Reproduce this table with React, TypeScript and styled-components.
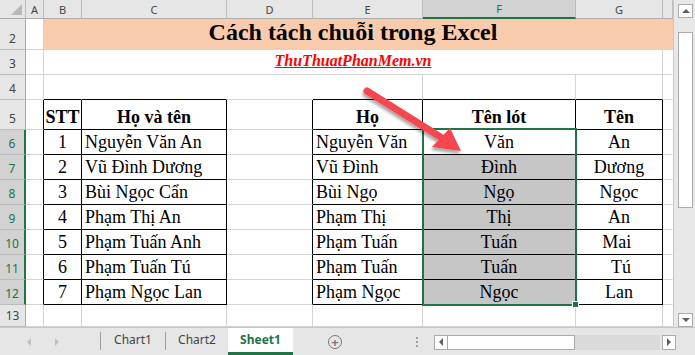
import styled, { createGlobalStyle } from "styled-components";

const GlobalStyle = createGlobalStyle`
  html, body { margin: 0; padding: 0; background: #fff; }
  body { font-family: "Liberation Serif", "Times New Roman", serif; }
`;

const GREEN = "#217346";
const GRID = "#d4d4d4";
const PEACH = "#f8cbad";
const BLACK = "#000";
const SHADE = "#c6c6c6";

const COLS = [26, 18, 38, 145, 86, 110, 153, 87, 10];
const ROWS = [19, 31, 25, 25, 30, 25, 25, 25, 25, 25, 25, 25, 22];
const LETTERS = ["A", "B", "C", "D", "E", "F", "G", ""];

// grid column index: 1 = row header, 2 = A ... 9 = H
const A = 2, B = 3, C = 4, D = 5, E = 6, F = 7, G = 8, H = 9;

const people = [
  ["1", "Nguyễn Văn An"],
  ["2", "Vũ Đình Dương"],
  ["3", "Bùi Ngọc Cẩn"],
  ["4", "Phạm Thị An"],
  ["5", "Phạm Tuấn Anh"],
  ["6", "Phạm Tuấn Tú"],
  ["7", "Phạm Ngọc Lan"],
];

const split = [
  ["Nguyễn Văn", "Văn", "An"],
  ["Vũ Đình", "Đình", "Dương"],
  ["Bùi Ngọ", "Ngọ", "Ngọc"],
  ["Phạm Thị", "Thị", "An"],
  ["Phạm Tuấn", "Tuấn", "Mai "],
  ["Phạm Tuấn", "Tuấn", " Tú"],
  ["Phạm Ngọc", "Ngọc", "Lan"],
];

const Window = styled.div`
  width: 695px;
  height: 355px;
  display: flex;
  flex-direction: column;
  overflow: hidden;
  background: #fff;
`;

const Workspace = styled.div`
  display: flex;
  height: 327px;
`;

const Sheet = styled.div`
  position: relative;
  width: 673px;
  display: grid;
  grid-template-columns: ${COLS.map((c) => c + "px").join(" ")};
  grid-template-rows: ${ROWS.map((r) => r + "px").join(" ")};
`;

const Corner = styled.div`
  grid-column: 1;
  grid-row: 1;
  box-sizing: border-box;
  background: #e6e6e6;
  border-right: 1px solid #bcbcbc;
  border-bottom: 1px solid #ababab;
  display: flex;
  align-items: flex-end;
  justify-content: flex-end;
  padding: 0 3px 3px 0;
`;

const CornerMark = styled.div`
  width: 0;
  height: 0;
  border-left: 11px solid transparent;
  border-bottom: 11px solid #b8b8b8;
`;

const ColHead = styled.div<{ $col: number; $active?: boolean }>`
  grid-column: ${(p) => p.$col};
  grid-row: 1;
  box-sizing: border-box;
  background: ${(p) => (p.$active ? "#d2d2d2" : "#e6e6e6")};
  border-right: 1px solid #bcbcbc;
  border-bottom: ${(p) => (p.$active ? `2px solid ${GREEN}` : "1px solid #ababab")};
  display: flex;
  align-items: center;
  justify-content: center;
  font-family: "Noto Sans", "Open Sans", sans-serif;
  font-size: 11px;
  color: ${(p) => (p.$active ? GREEN : "#444")};
`;

const RowHead = styled.div<{ $row: number; $active?: boolean }>`
  grid-column: 1;
  grid-row: ${(p) => p.$row};
  box-sizing: border-box;
  background: ${(p) => (p.$active ? "#d2d2d2" : "#e6e6e6")};
  border-right: ${(p) => (p.$active ? `2px solid ${GREEN}` : "1px solid #ababab")};
  border-bottom: 1px solid #bcbcbc;
  display: flex;
  align-items: flex-end;
  justify-content: center;
  padding-bottom: 2px;
  font-family: "Noto Sans", "Open Sans", sans-serif;
  font-size: 12px;
  line-height: 16px;
  color: ${(p) => (p.$active ? GREEN : "#444")};
`;

const Cell = styled.div<{
  $col: number;
  $row: number;
  $span?: number;
  $fill?: string;
  $r?: string;
  $b?: string;
  $align?: "left" | "center";
  $bold?: boolean;
}>`
  grid-column: ${(p) => p.$col} / span ${(p) => p.$span ?? 1};
  grid-row: ${(p) => p.$row};
  box-sizing: border-box;
  min-width: 0;
  background: ${(p) => p.$fill ?? "#fff"};
  border-right: 1px solid ${(p) => p.$r ?? GRID};
  border-bottom: 1px solid ${(p) => p.$b ?? GRID};
  display: flex;
  align-items: flex-end;
  justify-content: ${(p) => (p.$align === "center" ? "center" : "flex-start")};
  padding: 0 3px 2px;
  font-size: 18px;
  line-height: 20px;
  font-weight: ${(p) => (p.$bold ? 700 : 400)};
  color: #000;
  white-space: pre;
`;

const Title = styled.span`
  font-size: 24px;
  line-height: 28px;
  font-weight: 700;
  margin-bottom: 1px;
`;

const Brand = styled.span`
  font-size: 16px;
  line-height: 18px;
  font-weight: 700;
  font-style: italic;
  color: #ff0000;
  text-decoration: underline;
  margin-bottom: 2px;
`;

const Selection = styled.div`
  grid-column: ${F};
  grid-row: 6 / span 7;
  margin: -2px -1px -1px -1px;
  border: 2px solid ${GREEN};
  position: relative;
  pointer-events: none;
`;

const FillHandle = styled.div`
  position: absolute;
  right: -4px;
  bottom: -4px;
  width: 5px;
  height: 5px;
  background: ${GREEN};
  border: 1px solid #fff;
`;

const ArrowLayer = styled.svg`
  position: absolute;
  left: 0;
  top: 0;
  width: 673px;
  height: 327px;
  pointer-events: none;
`;

const VScroll = styled.div`
  width: 22px;
  box-sizing: border-box;
  background: #e8e8e8;
  border-left: 1px solid #c8c8c8;
  display: flex;
  flex-direction: column;
  align-items: center;
  padding: 4px 0 0 2px;
`;

const ScrollBtn = styled.div`
  width: 15px;
  height: 14px;
  box-sizing: border-box;
  background: #fff;
  border: 1px solid #ababab;
  display: flex;
  align-items: center;
  justify-content: center;
  flex-shrink: 0;
`;

const VThumb = styled.div`
  width: 15px;
  height: 176px;
  margin-top: 14px;
  box-sizing: border-box;
  background: #fff;
  border: 1px solid #ababab;
`;

const Spacer = styled.div`
  flex: 1;
`;

const Tri = styled.div<{ $dir: "up" | "down" | "left" | "right"; $color?: string; $size?: number }>`
  width: 0;
  height: 0;
  ${(p) => {
    const s = p.$size ?? 4;
    const c = p.$color ?? "#606060";
    if (p.$dir === "up") return `border-left:${s}px solid transparent;border-right:${s}px solid transparent;border-bottom:${s}px solid ${c};`;
    if (p.$dir === "down") return `border-left:${s}px solid transparent;border-right:${s}px solid transparent;border-top:${s}px solid ${c};`;
    if (p.$dir === "left") return `border-top:${s}px solid transparent;border-bottom:${s}px solid transparent;border-right:${s}px solid ${c};`;
    return `border-top:${s}px solid transparent;border-bottom:${s}px solid transparent;border-left:${s}px solid ${c};`;
  }}
`;

const TabBar = styled.div`
  height: 28px;
  box-sizing: border-box;
  border-top: 1px solid #c6c6c6;
  background: #e6e6e6;
  display: flex;
  align-items: stretch;
  font-family: "Noto Sans", "Open Sans", sans-serif;
  font-size: 12px;
  color: #444;
`;

const NavArea = styled.div`
  width: 100px;
  display: flex;
  align-items: center;
  gap: 24px;
  padding-left: 27px;
  box-sizing: border-box;
`;

const Divider = styled.div`
  width: 1px;
  background: #9c9c9c;
  margin: 4px 0 5px;
`;

const Tab = styled.div<{ $active?: boolean; $w: number }>`
  width: ${(p) => p.$w}px;
  box-sizing: border-box;
  display: flex;
  align-items: center;
  justify-content: center;
  padding-bottom: 2px;
  background: ${(p) => (p.$active ? "#fff" : "transparent")};
  border-bottom: ${(p) => (p.$active ? `3px solid ${GREEN}` : "3px solid transparent")};
  color: ${(p) => (p.$active ? GREEN : "#444")};
  font-weight: ${(p) => (p.$active ? 700 : 400)};
`;

const AddSheet = styled.div`
  width: 12px;
  height: 12px;
  margin: 0 0 0 35px;
  align-self: center;
  border: 1.5px solid #777;
  border-radius: 50%;
  display: flex;
  align-items: center;
  justify-content: center;
  color: #777;
  font-size: 13px;
  line-height: 12px;
  font-weight: 700;
`;

const Grip = styled.div`
  margin-left: 74px;
  align-self: center;
  display: flex;
  flex-direction: column;
  gap: 2px;
`;

const GripDot = styled.div`
  width: 2px;
  height: 2px;
  background: #a0a0a0;
`;

const HScroll = styled.div`
  margin-left: 16px;
  align-self: center;
  display: flex;
  align-items: center;
  margin-top: 1px;
`;

const HBtn = styled.div`
  width: 14px;
  height: 15px;
  box-sizing: border-box;
  background: #fff;
  border: 1px solid #ababab;
  display: flex;
  align-items: center;
  justify-content: center;
`;

const HThumb = styled.div`
  width: 127px;
  height: 15px;
  box-sizing: border-box;
  background: #fff;
  border: 1px solid #ababab;
  border-left: none;
`;

const HTrack = styled.div`
  width: 85px;
  height: 15px;
  background: #dadada;
  margin-right: 2px;
`;

function borderFor(row: number, col: number) {
  const tableRow = row >= 5 && row <= 12;
  const inLeft = tableRow && (col === B || col === C);
  const inRight = tableRow && (col === E || col === F || col === G);
  let r: string | undefined;
  let b: string | undefined;
  if (inLeft || inRight || (tableRow && (col === A || col === D))) r = BLACK;
  if (inLeft || inRight || (row === 4 && (col === B || col === C || col === E || col === F || col === G))) b = BLACK;
  if (row === 4 && (col === B || col === C || col === D)) r = "#fff";
  if (col === H) r = "#fff";
  return { r, b };
}

function cellContent(row: number, col: number): { text: string; align?: "left" | "center"; bold?: boolean } {
  if (row === 5) {
    if (col === B) return { text: "STT", align: "center", bold: true };
    if (col === C) return { text: "Họ và tên", align: "center", bold: true };
    if (col === E) return { text: "Họ", align: "center", bold: true };
    if (col === F) return { text: "Tên lót", align: "center", bold: true };
    if (col === G) return { text: "Tên", align: "center", bold: true };
  }
  if (row >= 6 && row <= 12) {
    const i = row - 6;
    if (col === B) return { text: people[i][0], align: "center" };
    if (col === C) return { text: people[i][1] };
    if (col === E) return { text: split[i][0] };
    if (col === F) return { text: split[i][1], align: "center" };
    if (col === G) return { text: split[i][2], align: "center" };
  }
  return { text: "" };
}

export default function App() {
  const cells = [];
  for (let row = 4; row <= 13; row++) {
    for (let col = A; col <= H; col++) {
      const { r, b } = borderFor(row, col);
      const c = cellContent(row, col);
      const fill = col === F && row >= 7 && row <= 12 ? SHADE : undefined;
      cells.push(
        <Cell key={`${row}-${col}`} $row={row} $col={col} $r={r} $b={b} $fill={fill} $align={c.align} $bold={c.bold}>
          {c.text}
        </Cell>
      );
    }
  }

  return (
    <Window>
      <GlobalStyle />
      <Workspace>
        <Sheet>
          <Corner>
            <CornerMark />
          </Corner>
          {LETTERS.map((l, i) => (
            <ColHead key={i} $col={i + 2} $active={i + 2 === F}>
              {l}
            </ColHead>
          ))}
          {ROWS.slice(1).map((_, i) => {
            const row = i + 2;
            return (
              <RowHead key={row} $row={row} $active={row >= 6 && row <= 12}>
                {row}
              </RowHead>
            );
          })}

          <Cell $row={2} $col={A} />
          <Cell $row={2} $col={B} $span={6} $fill={PEACH} $r={PEACH} $b={PEACH} $align="center">
            <Title>Cách tách chuỗi trong Excel</Title>
          </Cell>
          <Cell $row={2} $col={H} $fill={PEACH} $r={PEACH} $b={PEACH} />

          <Cell $row={3} $col={A} />
          <Cell $row={3} $col={B} $span={6} $align="center">
            <Brand>ThuThuatPhanMem.vn</Brand>
          </Cell>
          <Cell $row={3} $col={H} $r="#fff" />

          {cells}

          <Selection>
            <FillHandle />
          </Selection>

          <ArrowLayer viewBox="0 0 673 327">
            <defs>
              <filter id="arrowShadow" x="-20%" y="-20%" width="140%" height="140%">
                <feDropShadow dx="-1" dy="3" stdDeviation="1.5" floodColor="#000" floodOpacity="0.35" />
              </filter>
            </defs>
            <g filter="url(#arrowShadow)">
              <line x1="367" y1="91" x2="442" y2="138" stroke="#f6464f" strokeWidth="7" strokeLinecap="round" />
              <polygon points="461,151 432,147 450,128" fill="#f6464f" />
            </g>
          </ArrowLayer>
        </Sheet>

        <VScroll>
          <ScrollBtn>
            <Tri $dir="up" $size={4} />
          </ScrollBtn>
          <VThumb />
          <Spacer />
          <ScrollBtn>
            <Tri $dir="down" $size={4} />
          </ScrollBtn>
        </VScroll>
      </Workspace>

      <TabBar>
        <NavArea>
          <Tri $dir="left" $size={4} $color="#c0c0c0" />
          <Tri $dir="right" $size={4} $color="#c0c0c0" />
        </NavArea>
        <Divider />
        <Tab $w={64}>Chart1</Tab>
        <Divider />
        <Tab $w={62}>Chart2</Tab>
        <Tab $w={65} $active>
          Sheet1
        </Tab>
        <AddSheet>+</AddSheet>
        <Grip>
          <GripDot />
          <GripDot />
          <GripDot />
        </Grip>
        <HScroll>
          <HBtn>
            <Tri $dir="left" $size={4} />
          </HBtn>
          <HThumb />
          <HTrack />
          <HBtn>
            <Tri $dir="right" $size={4} />
          </HBtn>
        </HScroll>
      </TabBar>
    </Window>
  );
}
